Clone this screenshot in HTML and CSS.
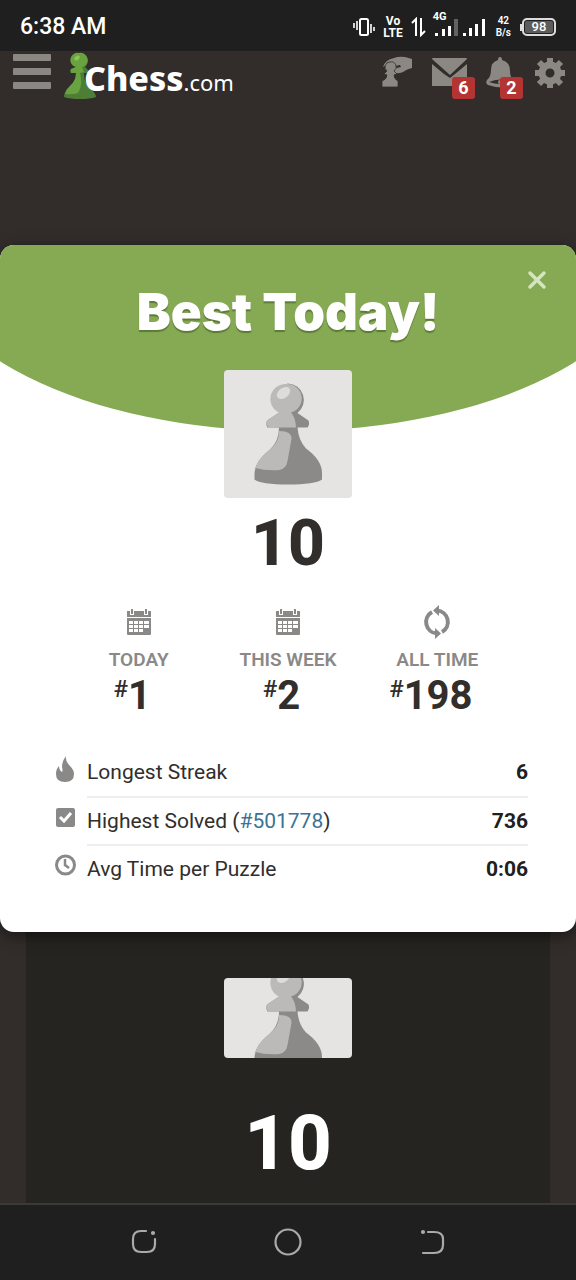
FILE: index.html
```
<!DOCTYPE html>
<html lang="en">
<head>
<meta charset="utf-8">
<meta name="viewport" content="width=device-width, initial-scale=1">
<title>Chess.com</title>
<link rel="stylesheet" href="styles.css">
</head>
<body>
<svg class="defs" aria-hidden="true">
  <defs>
    <symbol id="pawn" viewBox="0 0 128 128">
      <path fill="#8b8a88" d="M64 13.500a16.500 16.500 0 0 1 9.500 29.500l11 7.500q1.500 4-1 7H73.500q1 13 8.500 21Q98 90 98 103v6.500Q91 114.500 64 114.500T30.500 109.500V103Q31 91 46 79.500 55 71 55 57.500H43.500q-2-3-.5-7L56 42a16 16 0 0 1 8-28.500z"/>
      <path fill="#bbbab8" d="M63 14a14.500 14.500 0 0 1 4 28.500q4.500 5 5 15H44q-2-3-1-7L55 42.500A15 15 0 0 1 63 14z"/>
      <path fill="#bbbab8" d="M55 61q13 0 12.500 8l-4 22q-1.500 8-8 9-14 1-24-2 3-10 14-18 10-8 9.500-19z"/>
      <ellipse cx="59.500" cy="23" rx="7.500" ry="5" fill="#dddcda" transform="rotate(-38 59.500 23)"/>
    </symbol>
    <symbol id="calendar" viewBox="0 0 26 28">
      <path fill="#8b8987" d="M1 3h3v4h4V3h10v4h4V3h3v6H1zM5 1h2v5H5zM19 1h2v5h-2z"/>
      <path fill="#8b8987" d="M1 10h24v16q0 1-1 1H2q-1 0-1-1z"/>
      <path fill="#fff" d="M3 13h4v3H3zM8 13h4v3H8zM13 13h4v3h-4zM18 13h5v3h-5zM3 17h4v3H3zM8 17h4v3H8zM13 17h4v3h-4zM18 17h5v3h-5zM3 21h4v3H3zM8 21h4v3H8zM13 21h4v3h-4z"/>
    </symbol>
  </defs>
</svg>

<div class="status-bar">
  <time class="clock">6:38 AM</time>
  <div class="status-icons">
    <svg width="22" height="22" viewBox="0 0 22 22" fill="none" stroke="#fff"><rect x="7" y="3" width="8" height="16" rx="1.500" stroke-width="2"/><path stroke-width="1.600" d="M4 5v9M1 7v5M18 8v9M21 11v4"/></svg>
    <span class="volte"><span>Vo</span><span>LTE</span></span>
    <svg width="15" height="20" viewBox="0 0 15 20" fill="none" stroke="#fff" stroke-width="2"><path d="M1 6l4-4v17M10 1v17l4-4"/></svg>
    <span class="signal"><span class="network">4G</span>
      <svg width="52" height="20" viewBox="0 0 52 20" fill="#fff"><path d="M1 16h3v3H1zM8 12h3v7H8zM14 9h3v10h-3zM29 16h3v3h-3zM35 11h3v8h-3zM41 7h3v12h-3zM48 2h3v17h-3z"/><path fill="#626262" d="M20 2h4v17h-4z"/></svg>
    </span>
    <span class="speed"><span>42</span><span>B/s</span></span>
    <span class="battery">98</span>
  </div>
</div>

<header class="site-header">
  <button class="icon-button menu" aria-label="Menu"><svg width="40" height="38" viewBox="0 0 40 38" fill="#8b8783"><rect x="1" y="2" width="38" height="7" rx="1"/><rect x="1" y="16" width="38" height="7" rx="1"/><rect x="1" y="30" width="38" height="7" rx="1"/></svg></button>
  <a class="logo" href="#">
    <svg width="32" height="48" viewBox="0 0 32 48"><path fill="#4e7d35" d="M16 1a8 8 0 0 1 5 14l4 4v2h-5q0 12 8 17 4 4 4 7-6 2-16 2T0 45q0-6 6-11 6-5 6-13H7q-1-2 0-4l5-2A8 8 0 0 1 16 1z"/><path fill="#69a33f" d="M15 1a7 7 0 0 1 3 14l2 5-4 1q3 12-2 20-6 2-13 1 1-4 5-8 6-5 6-13H7q-1-2 0-4l5-2A7 7 0 0 1 15 1z"/><ellipse cx="13" cy="6" rx="3" ry="2" fill="#8fc45a" transform="rotate(-35 13 6)"/></svg>
    <span class="wordmark">Chess<span class="tld">.com</span></span>
  </a>
  <nav class="tools" aria-label="Account">
    <button class="icon-button" aria-label="Play"><svg width="32" height="34" viewBox="0 0 32 34"><path fill="#8b8783" d="M1 11Q3 4 12 2q5-2 11-1l7 2v9q-5 1-9 4-4 2-10 1l-1-4 9-2-1-2-5 1Q8 5 1 11z"/><g fill="#8b8783" stroke="#332e2c" stroke-width=".8"><path d="M8 6a5 5 0 0 1 4 9l3 3-3 1q0 4 4 6v6H0v-6q5-2 5-6l-3-1 3-3a5 5 0 0 1 3-9z"/></g></svg></button>
    <button class="icon-button" aria-label="Messages, 6 new"><svg width="36" height="34" viewBox="0 0 36 34" fill="#8b8783"><path d="M0 3q0-1 1-1h33q1 0 1 1L18 19zM0 8l12 10 6 4 5-4L35 8v22H0z"/></svg><span class="badge">6</span></button>
    <button class="icon-button" aria-label="Alerts, 2 new"><svg width="30" height="34" viewBox="0 0 30 34"><path fill="#8b8783" d="M14 1q2 0 2 3 8 2 8 11 0 7 4 10v4q-10 5-26 0-3-2-1-5 4-3 4-10Q5 6 12 4q0-3 2-3z"/><path fill="#332e2c" d="M3 26q11-5 22 0-11 4-22 0z"/><circle cx="14" cy="26" r="2" fill="#8b8783"/></svg><span class="badge">2</span></button>
    <button class="icon-button" aria-label="Settings"><svg width="34" height="34" viewBox="0 0 34 34"><circle cx="16" cy="17" r="8" fill="none" stroke="#8b8783" stroke-width="7"/><g stroke="#8b8783" stroke-width="6"><path d="M16 2v6M16 26v6M1 17h6M25 17h6M5 6l4 4M23 24l4 4M5 28l4-4M23 10l4-4"/></g></svg></button>
  </nav>
</header>

<main class="page">
  <section class="dialog" role="dialog" aria-labelledby="dialog-title">
    <button class="close" aria-label="Close"><svg width="20" height="20" viewBox="0 0 20 20" fill="none" stroke="#d3e6c0" stroke-width="3.500" stroke-linecap="round"><path d="M3 3l14 14M17 3L3 17"/></svg></button>
    <h1 class="title" id="dialog-title">Best Today!</h1>
    <svg class="avatar" viewBox="0 0 128 128" role="img" aria-label="Player avatar"><use href="#pawn"/></svg>
    <p class="score">10</p>
    <ul class="ranks">
      <li class="rank"><svg width="26" height="28"><use href="#calendar"/></svg><span class="rank-label">TODAY</span><span class="rank-value"><span class="hash">#</span>1</span></li>
      <li class="rank"><svg width="26" height="28"><use href="#calendar"/></svg><span class="rank-label">THIS WEEK</span><span class="rank-value"><span class="hash">#</span>2</span></li>
      <li class="rank"><svg width="28" height="34" viewBox="0 0 28 34" fill="none"><path stroke="#8b8987" stroke-width="4" d="M9 7A11.500 11.500 0 0 0 14 28.500M19 27A11.500 11.500 0 0 0 14 5.500"/><path fill="#8b8987" d="M16 0v11l-6-5.500zM12 23v11l6-5.500z"/></svg><span class="rank-label">ALL TIME</span><span class="rank-value"><span class="hash">#</span>198</span></li>
    </ul>
    <ul class="stats">
      <li class="stat"><svg width="22" height="32" viewBox="0 0 22 32"><path fill="#8b8987" d="M12 0q-1 5 4 10 4 4 4 8 0 8-9 8T2 18q0-5 3-8 0 4 3 6 1-1 0-5 0-6 4-11z"/></svg><span class="stat-row"><span>Longest Streak</span><strong>6</strong></span></li>
      <li class="stat"><svg width="22" height="28" viewBox="0 0 22 28"><rect x="2" y="2" width="19" height="19" rx="2" fill="#8b8987"/><path fill="none" stroke="#fff" stroke-width="3" d="M6 11l4 4 7-8"/></svg><span class="stat-row"><span>Highest Solved (<a href="#">#501778</a>)</span><strong>736</strong></span></li>
      <li class="stat"><svg width="22" height="28" viewBox="0 0 22 28" fill="none" stroke="#8b8987" stroke-width="3"><circle cx="11.500" cy="11" r="9"/><path stroke-width="2.500" d="M11 5v6l4 3"/></svg><span class="stat-row"><span>Avg Time per Puzzle</span><strong>0:06</strong></span></li>
    </ul>
  </section>

  <section class="result">
    <svg class="avatar avatar-cropped" viewBox="0 0 128 128" preserveAspectRatio="xMidYMid slice" role="img" aria-label="Player avatar"><use href="#pawn" width="128" height="128"/></svg>
    <p class="result-score">10</p>
  </section>
</main>

<nav class="system-nav" aria-label="System">
  <button class="icon-button" aria-label="Recent apps"><svg width="28" height="28" viewBox="0 0 28 28" fill="none" stroke="#aaa" stroke-width="2.200" stroke-linecap="round"><path d="M16 3h-5q-8 0-8 8v5q0 8 8 8h6q8 0 8-8v-5"/><circle cx="23" cy="5" r="1" fill="#aaa"/></svg></button>
  <button class="icon-button" aria-label="Home"><svg width="28" height="28" viewBox="0 0 28 28" fill="none" stroke="#aaa" stroke-width="2.200"><circle cx="14" cy="14" r="12.500"/></svg></button>
  <button class="icon-button" aria-label="Back"><svg width="28" height="28" viewBox="0 0 28 28" fill="none" stroke="#aaa" stroke-width="2.200" stroke-linecap="round"><path d="M10 4h6q9 0 9 7v6q0 8-9 8H5"/><circle cx="5" cy="4" r="1" fill="#aaa"/></svg></button>
</nav>
</body>
</html>
```
FILE: styles.css
```
* {
  box-sizing: border-box;
}

body {
  margin: 0;
  min-height: 100vh;
  display: flex;
  flex-direction: column;
  background: #322d2a;
  color: #312e2b;
  font-family: Roboto, "Liberation Sans", sans-serif;
}

h1, p, ul {
  margin: 0;
  padding: 0;
}

ul {
  list-style: none;
}

svg {
  display: block;
  flex: none;
}

button {
  border: 0;
  padding: 0;
  background: none;
  font: inherit;
  cursor: pointer;
}

.defs {
  position: absolute;
  width: 0;
  height: 0;
}

/* Status bar */
.status-bar {
  display: flex;
  align-items: center;
  justify-content: space-between;
  height: 51px;
  padding: 2px 20px 0 20px;
  background: #1f1f1f;
  color: #fff;
}

.clock {
  font-size: 23px;
  font-weight: 500;
}

.status-icons {
  display: flex;
  align-items: center;
  gap: 8px;
  font-weight: 700;
}

.volte,
.speed {
  display: flex;
  flex-direction: column;
  align-items: center;
  font-size: 12px;
  line-height: 12px;
}

.speed {
  margin-left: 2px;
  font-size: 10px;
  font-weight: 600;
}

.signal {
  position: relative;
}

.network {
  position: absolute;
  top: -5px;
  left: -1px;
  font-size: 11px;
  line-height: 10px;
}

.battery {
  position: relative;
  width: 34px;
  margin-left: 3px;
  border: 2px solid #ddd;
  border-radius: 5px;
  background: #5c5c5c;
  box-shadow: inset 0 0 0 1px #1f1f1f;
  font-size: 13px;
  font-weight: 500;
  line-height: 14px;
  text-align: center;
}

.battery::before {
  content: "";
  position: absolute;
  top: 4px;
  left: -4px;
  width: 2px;
  height: 7px;
  background: #ddd;
}

/* Site header */
.site-header {
  display: flex;
  align-items: flex-start;
  height: 50px;
  padding: 1px 8px 0 12px;
}

.logo {
  display: flex;
  margin-left: 12px;
  color: #fff;
  text-decoration: none;
}

.wordmark {
  margin: 4px 0 0 -12px;
  font-family: "Noto Sans", "Open Sans", sans-serif;
  font-size: 34px;
  font-weight: 800;
  line-height: 44px;
}

.tld {
  font-size: 22px;
  font-weight: 400;
}

.tools {
  display: flex;
  gap: 18px;
  margin: 4px 0 0 auto;
}

.icon-button {
  position: relative;
}

.badge {
  position: absolute;
  right: -7px;
  bottom: -9px;
  width: 23px;
  border-radius: 3px;
  background: #b33430;
  color: #fff;
  font-size: 18px;
  font-weight: 700;
  line-height: 22px;
}

/* Result dialog */
.page {
  flex: 1;
  display: flex;
  flex-direction: column;
  padding-top: 144px;
}

.dialog {
  position: relative;
  isolation: isolate;
  overflow: hidden;
  display: flex;
  flex-direction: column;
  align-items: center;
  padding-bottom: 40px;
  border-radius: 14px;
  background: #fff;
  box-shadow: 0 4px 16px rgba(0, 0, 0, 0.5);
}

.dialog::before {
  content: "";
  position: absolute;
  z-index: -1;
  top: 0;
  left: -14%;
  right: -14%;
  height: 186px;
  border-radius: 0 0 50% 50% / 0 0 100% 100%;
  background: #86a954;
}

.close {
  position: absolute;
  top: 25px;
  right: 29px;
}

.title {
  padding-top: 35px;
  color: #fff;
  font-family: Inter, Roboto, sans-serif;
  font-size: 51px;
  font-weight: 900;
  line-height: 64px;
  text-shadow: 0 2px 1px #5b7a34;
}

.avatar {
  width: 128px;
  height: 128px;
  margin-top: 26px;
  border-radius: 4px;
  background: #e6e4e2;
}

.score {
  margin-top: 12px;
  font-size: 64px;
  font-weight: 800;
  line-height: 68px;
}

.ranks {
  align-self: stretch;
  display: grid;
  grid-template-columns: repeat(3, 1fr);
  margin-top: 26px;
  padding: 0 64px;
}

.rank {
  display: grid;
  grid-template-rows: 36px 36px 40px;
  align-items: center;
  justify-items: center;
}

.rank-label {
  padding-top: 2px;
  color: #8b8987;
  font-size: 19px;
  font-weight: 600;
}

.rank-value {
  padding-right: 13px;
  font-size: 40px;
  font-weight: 700;
  line-height: 40px;
}

.hash {
  font-size: 24px;
  font-weight: 500;
  line-height: 24px;
  vertical-align: 12px;
}

.stats {
  align-self: stretch;
  margin-top: 32px;
  padding: 0 48px 0 54px;
  font-size: 21px;
}

.stat {
  display: flex;
  gap: 11px;
  align-items: center;
}

.stat-row {
  flex: 1;
  display: flex;
  align-items: center;
  justify-content: space-between;
  height: 48px;
}

.stat + .stat .stat-row {
  border-top: 2px solid #eee;
}

.stat strong {
  color: #21201d;
}

.stat a {
  color: #3b7396;
  text-decoration: none;
}

/* Board panel behind the dialog */
.result {
  flex: 1;
  display: flex;
  flex-direction: column;
  align-items: center;
  margin: 0 26px;
  padding-top: 46px;
  background: #262421;
}

.avatar-cropped {
  height: 80px;
  margin-top: 0;
}

.result-score {
  margin-top: 40px;
  color: #fff;
  font-size: 76px;
  font-weight: 800;
  line-height: 90px;
}

/* System navigation */
.system-nav {
  display: flex;
  align-items: center;
  justify-content: center;
  gap: 116px;
  height: 77px;
  padding-bottom: 2px;
  border-top: 2px solid #3b3b36;
  background: #1f1f1f;
}
```
